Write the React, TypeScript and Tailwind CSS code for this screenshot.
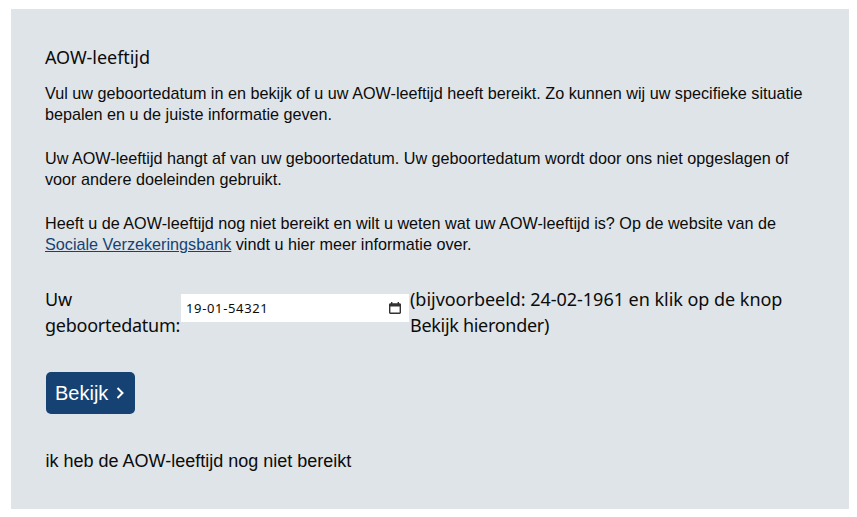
import { useState } from 'react';

function CalendarIcon() {
  return (
    <svg width="14" height="14" viewBox="0 0 14 14" className="shrink-0 text-[#333]" fill="currentColor" aria-hidden="true">
      <path d="M3 1h1.4v1.2h5.2V1H11v1.2h.6c.8 0 1.4.6 1.4 1.4v8c0 .8-.6 1.4-1.4 1.4H2.4c-.8 0-1.4-.6-1.4-1.4v-8c0-.8.6-1.4 1.4-1.4H3V1zm-.6 4.6v6h9.2v-6H2.4z" />
    </svg>
  );
}

export default function App() {
  const [date] = useState('19-01-54321');

  return (
    <div className="h-[517px] w-[857px] bg-white pl-[11px] pr-[8px] pt-[9px] font-['Liberation_Sans',Arial,sans-serif]">
      <div className="h-[500px] bg-[#dfe4e8] pl-[34px] pr-[30px] pt-[36px] text-[16.2px] leading-[21px] text-[#0b0b0b]">
        <h2 className="font-['Noto_Sans',sans-serif] text-[18px] leading-[24px] font-normal tracking-[-0.05px]">AOW-leeftijd</h2>
        <p className="mt-[14px]">
          Vul uw geboortedatum in en bekijk of u uw AOW-leeftijd heeft bereikt. Zo kunnen wij uw specifieke situatie bepalen en u de juiste informatie geven.
        </p>
        <p className="mt-[23px]">
          Uw AOW-leeftijd hangt af van uw geboortedatum. Uw geboortedatum wordt door ons niet opgeslagen of voor andere doeleinden gebruikt.
        </p>
        <p className="mt-[23px]">
          Heeft u de AOW-leeftijd nog niet bereikt en wilt u weten wat uw AOW-leeftijd is? Op de website van de{' '}
          <a href="#" className="text-[#154273] underline">Sociale Verzekeringsbank</a> vindt u hier meer informatie over.
        </p>

        <div className="mt-[31px] flex items-start font-['Noto_Sans',sans-serif] text-[18px] leading-[26px]">
          <label className="w-[135px] shrink-0 tracking-[-0.25px]">Uw geboortedatum:</label>
          <div className="ml-[1px] mt-[8px] flex h-[28px] w-[228px] shrink-0 items-center justify-between bg-white pl-[5px] pr-[7px] text-[13px] tracking-[0.65px]">
            <span>{date}</span>
            <CalendarIcon />
          </div>
          <span className="ml-[1px] w-[390px] tracking-[-0.03px]">
            (bijvoorbeeld: 24-02-1961 en klik op de knop <span className="tracking-[-0.3px]">Bekijk hieronder)</span>
          </span>
        </div>

        <button className="ml-[1px] mt-[34px] flex h-[42px] w-[89px] items-center gap-[8px] rounded-[5px] bg-[#154273] pl-[9px] text-[20px] text-white">
          Bekijk
          <svg width="8" height="14" viewBox="0 0 8 14" fill="none" stroke="currentColor" strokeWidth="2" aria-hidden="true">
            <path d="M1.5 2l5 5-5 5" />
          </svg>
        </button>

        <p className="ml-[0.5px] mt-[35px] text-[18px] leading-[24px]">ik heb de AOW-leeftijd nog niet bereikt</p>
      </div>
    </div>
  );
}
